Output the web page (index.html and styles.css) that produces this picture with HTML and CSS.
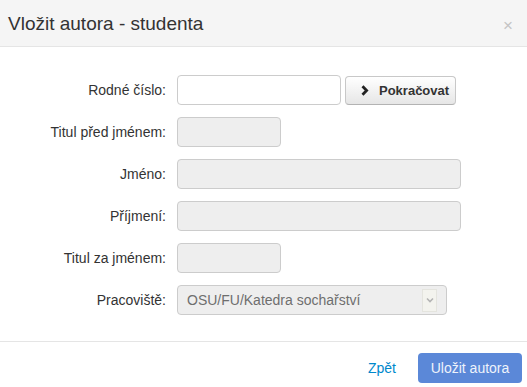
FILE: index.html
```html
<!DOCTYPE html>
<html lang="cs">
<head>
    <meta charset="UTF-8">
    <title>Vložit autora - studenta</title>
    <link rel="stylesheet" href="styles.css">
</head>
<body>
    <div class="modal">
        <div class="modal-header">
            <h3>Vložit autora - studenta</h3>
            <span class="close">&times;</span>
        </div>
        <div class="modal-body">
            <div class="row">
                <label>Rodné číslo:</label>
                <div class="input w164"></div>
                <div class="btn">
                    <svg width="8" height="11" viewBox="0 0 8 11"><polyline points="1.5,1.3 5.6,5.5 1.5,9.7" fill="none" stroke="#222" stroke-width="2.8"/></svg>
                    Pokračovat
                </div>
            </div>
            <div class="row">
                <label>Titul před jménem:</label>
                <div class="input disabled w104"></div>
            </div>
            <div class="row">
                <label>Jméno:</label>
                <div class="input disabled w284"></div>
            </div>
            <div class="row">
                <label>Příjmení:</label>
                <div class="input disabled w284"></div>
            </div>
            <div class="row">
                <label>Titul za jménem:</label>
                <div class="input disabled w104"></div>
            </div>
            <div class="row">
                <label>Pracoviště:</label>
                <div class="input disabled select">
                    <span class="value">OSU/FU/Katedra sochařství</span>
                    <span class="arrow">
                        <svg width="8" height="6" viewBox="0 0 8 6"><polyline points="1,1.5 4,4.5 7,1.5" fill="none" stroke="#b4b4b4" stroke-width="1.6"/></svg>
                    </span>
                </div>
            </div>
        </div>
        <div class="modal-footer">
            <a class="link">Zpět</a>
            <div class="btn-primary">Uložit autora</div>
        </div>
    </div>
</body>
</html>
```

FILE: styles.css
```css
body {
    margin: 0px;
    background-color: #ffffff;
}

* {
    font-family: 'Liberation Sans', Arial, sans-serif;
    box-sizing: border-box;
}

.modal {
    width: 527px;
    height: 387px;
    display: flex;
    flex-direction: column;
}

.modal-header {
    height: 47px;
    background-color: #f5f5f5;
    border-bottom: 1px solid #e5e5e5;
    display: flex;
    align-items: center;
    justify-content: space-between;
    padding: 2px 14px 0px 8px;
}

.modal-header h3 {
    margin: 0px;
    font-size: 19px;
    font-weight: normal;
    color: #333333;
}

.close {
    font-size: 17px;
    color: #c4c4c4;
    margin-top: 3px;
}

.modal-body {
    padding-top: 28px;
    height: 294px;
    display: flex;
    flex-direction: column;
    gap: 12px;
}

.row {
    display: flex;
    align-items: center;
    height: 30px;
}

.row label {
    width: 166px;
    text-align: right;
    font-size: 14px;
    color: #333333;
    margin-right: 11px;
}

.input {
    height: 30px;
    border: 1px solid #cccccc;
    border-radius: 4px;
    background-color: #ffffff;
}

.disabled {
    background-color: #eeeeee;
}

.w164 {
    width: 164px;
}

.w104 {
    width: 104px;
}

.w284 {
    width: 284px;
}

.select {
    width: 270px;
    display: flex;
    align-items: center;
    justify-content: space-between;
    padding: 0px 9px 0px 9px;
}

.value {
    font-size: 14px;
    color: #6e6e6e;
}

.arrow {
    width: 15px;
    height: 23px;
    background-color: #f3f3ee;
    border: 1px solid #e4e4de;
    display: flex;
    align-items: center;
    justify-content: center;
}

.btn {
    margin-left: 4px;
    width: 111px;
    height: 29px;
    border: 1px solid #c8c8c8;
    border-bottom-color: #b3b3b3;
    border-radius: 4px;
    background: linear-gradient(#ffffff, #e6e6e6);
    display: flex;
    align-items: center;
    gap: 10px;
    font-size: 13px;
    font-weight: bold;
    color: #333333;
    padding-left: 15px;
}

.modal-footer {
    border-top: 1px solid #e5e5e5;
    display: flex;
    justify-content: flex-end;
    align-items: center;
    padding: 11px 5px 0px 0px;
    gap: 22px;
}

.link {
    color: #0088cc;
    font-size: 14px;
}

.btn-primary {
    width: 104px;
    height: 30px;
    border-radius: 4px;
    background-color: #5b88d8;
    color: #eef3fb;
    font-size: 14px;
    display: flex;
    align-items: center;
    justify-content: center;
}
```
